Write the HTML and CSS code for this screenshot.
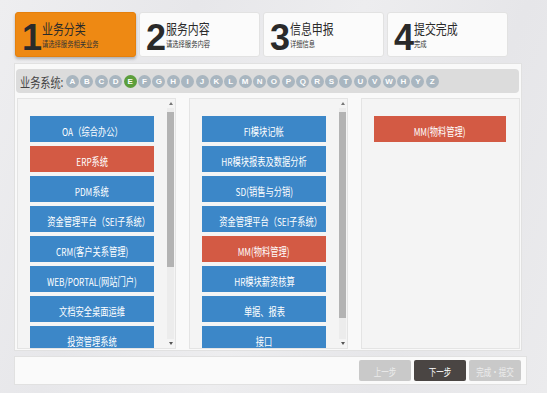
FILE: index.html
```html
<!DOCTYPE html>
<html lang="zh-CN">
<head>
    <meta charset="UTF-8">
    <meta name="viewport" content="width=device-width, initial-scale=1.0">
    <title>服务申报</title>
    <link rel="stylesheet" href="styles.css">
</head>
<body>
  <div class="steps">
    <div class="step active">
      <span class="num">1</span>
      <div class="step-text"><span class="step-title">业务分类</span><span class="step-sub">请选择服务相关业务</span></div>
    </div>
    <div class="step">
      <span class="num">2</span>
      <div class="step-text"><span class="step-title">服务内容</span><span class="step-sub">请选择服务内容</span></div>
    </div>
    <div class="step">
      <span class="num">3</span>
      <div class="step-text"><span class="step-title">信息申报</span><span class="step-sub">详细信息</span></div>
    </div>
    <div class="step">
      <span class="num">4</span>
      <div class="step-text"><span class="step-title">提交完成</span><span class="step-sub">完成</span></div>
    </div>
  </div>

  <div class="panel">
    <div class="filter">
      <span class="filter-label">业务系统:</span>
      <div class="letters">
        <span class="letter">A</span><span class="letter">B</span><span class="letter">C</span><span class="letter">D</span><span class="letter on">E</span><span class="letter">F</span><span class="letter">G</span><span class="letter">H</span><span class="letter">I</span><span class="letter">J</span><span class="letter">K</span><span class="letter">L</span><span class="letter">M</span><span class="letter">N</span><span class="letter">O</span><span class="letter">P</span><span class="letter">Q</span><span class="letter">R</span><span class="letter">S</span><span class="letter">T</span><span class="letter">U</span><span class="letter">V</span><span class="letter">W</span><span class="letter">H</span><span class="letter">Y</span><span class="letter">Z</span>
      </div>
    </div>

    <div class="cols">
      <div class="col">
        <div class="list">
          <div class="item"><span class="lbl">OA（综合办公）</span></div>
          <div class="item sel"><span class="lbl">ERP系统</span></div>
          <div class="item"><span class="lbl">PDM系统</span></div>
          <div class="item"><span class="lbl">资金管理平台（SEI子系统）</span></div>
          <div class="item"><span class="lbl">CRM(客户关系管理)</span></div>
          <div class="item"><span class="lbl">WEB/PORTAL(网站门户)</span></div>
          <div class="item"><span class="lbl">文档安全桌面运维</span></div>
          <div class="item"><span class="lbl">投资管理系统</span></div>
        </div>
        <div class="scroll">
          <span class="arrow up"></span>
          <div class="track"><div class="thumb" style="height:155px"></div></div>
          <span class="arrow down"></span>
        </div>
      </div>

      <div class="col">
        <div class="list">
          <div class="item"><span class="lbl">FI模块记帐</span></div>
          <div class="item"><span class="lbl">HR模块报表及数据分析</span></div>
          <div class="item"><span class="lbl">SD(销售与分销)</span></div>
          <div class="item"><span class="lbl">资金管理平台（SEI子系统）</span></div>
          <div class="item sel"><span class="lbl">MM(物料管理)</span></div>
          <div class="item"><span class="lbl">HR模块薪资核算</span></div>
          <div class="item"><span class="lbl">单据、报表</span></div>
          <div class="item"><span class="lbl">接口</span></div>
        </div>
        <div class="scroll">
          <span class="arrow up"></span>
          <div class="track"><div class="thumb" style="height:206px"></div></div>
          <span class="arrow down"></span>
        </div>
      </div>

      <div class="col">
        <div class="list">
          <div class="item sel"><span class="lbl">MM(物料管理)</span></div>
        </div>
      </div>
    </div>
  </div>

  <div class="footer">
    <button class="btn"><span class="lbl">上一步</span></button>
    <button class="btn next"><span class="lbl">下一步</span></button>
    <button class="btn"><span class="lbl">完成·提交</span></button>
  </div>
</body>
</html>
```

FILE: styles.css
```css
body {
    margin: 0;
    padding: 12px 20px 0 14px;
    height: 393px;
    box-sizing: border-box;
    overflow: hidden;
    font-family: "Noto Sans CJK SC", "Liberation Sans", sans-serif;
    color: #333;
    background: linear-gradient(112deg, #eeeef0 0%, #e7e7ea 28%, #ededef 52%, #e6e6e9 75%, #ebebed 100%);
}

/* step header */
.steps {
    display: flex;
    gap: 3px;
    padding-left: 1px;
}
.step {
    width: 121px;
    height: 45px;
    box-sizing: border-box;
    display: flex;
    align-items: center;
    padding-left: 6px;
    background-color: #fbfbfb;
    border: 1px solid #e2e2e2;
    border-radius: 3px;
}
.step.active {
    background-color: #ee8913;
    border-color: #e5800c;
    box-shadow: 0 2px 3px rgba(0,0,0,0.25);
}
.num {
    font-family: "Liberation Sans Narrow", "Liberation Sans", sans-serif;
    font-weight: bold;
    font-size: 36px;
    line-height: 36px;
    color: #2a2a2a;
    margin-top: 6px;
    letter-spacing: -1px;
}
.step-text {
    display: flex;
    flex-direction: column;
    margin-left: 1px;
}
.step-title {
    display: inline-block;
    font-size: 14px;
    line-height: 15px;
    color: #2a2a2a;
    transform: scaleX(0.78);
    transform-origin: left;
    white-space: nowrap;
}
.step-sub {
    display: inline-block;
    margin-top: 2px;
    font-size: 8.5px;
    line-height: 10px;
    color: #333;
    transform: scaleX(0.74);
    transform-origin: left;
    white-space: nowrap;
}

/* main panel */
.panel {
    width: 508px;
    box-sizing: border-box;
    margin-top: 6px;
    padding: 5px 2px 1px 1px;
    background-color: #f9f9f9;
    border: 1px solid #e1e1e1;
}
.filter {
    height: 24px;
    display: flex;
    align-items: center;
    padding-left: 4px;
    background-color: #dcdcdc;
    border-radius: 4px;
}
.filter-label {
    display: inline-block;
    width: 46px;
    font-size: 13px;
    color: #444;
    transform: scaleX(0.78);
    transform-origin: left;
    white-space: nowrap;
}
.letters {
    display: flex;
    gap: 1.4px;
}
.letter {
    width: 13px;
    height: 13px;
    border-radius: 50%;
    background-color: #a9b6c0;
    color: #fff;
    font-family: "Liberation Sans", sans-serif;
    font-size: 8px;
    font-weight: bold;
    line-height: 13px;
    text-align: center;
}
.letter.on {
    background-color: #5c9e3c;
}

.cols {
    display: grid;
    grid-template-columns: 159px 159px 159px;
    column-gap: 13px;
    margin-top: 5px;
    padding-left: 1px;
}
.col {
    height: 251px;
    box-sizing: border-box;
    display: flex;
    background-color: #f4f4f4;
    border: 1px solid #e4e4e4;
    overflow: hidden;
}
.list {
    flex: 1;
    min-width: 0;
    padding: 17px 13px 0 12px;
}
.item {
    height: 26px;
    margin-bottom: 4px;
    background-color: #3c87c8;
    color: #fff;
    text-align: center;
    line-height: 26px;
    white-space: nowrap;
}
.item.sel {
    background-color: #d35a44;
}
.lbl {
    display: inline-block;
    font-size: 11px;
    white-space: nowrap;
    transform: scaleX(0.75);
}

/* fake scrollbar */
.scroll {
    flex: none;
    width: 7px;
    margin-right: 1px;
    display: flex;
    flex-direction: column;
    align-items: center;
}
.track {
    flex: 1;
    width: 7px;
    background-color: #ececec;
}
.thumb {
    width: 7px;
    margin-top: 4px;
    background-color: #b3b3b3;
}
.arrow {
    width: 0;
    height: 0;
    margin: 3px 0;
    border-left: 2px solid transparent;
    border-right: 2px solid transparent;
}
.arrow.up {
    border-bottom: 3px solid #777;
}
.arrow.down {
    border-top: 3px solid #555;
}

/* footer */
.footer {
    width: 513px;
    height: 29px;
    box-sizing: border-box;
    margin-top: 5px;
    display: flex;
    justify-content: flex-end;
    align-items: center;
    gap: 3px;
    padding-right: 5px;
    background-color: #fafafa;
    border: 1px solid #e1e1e1;
}
.btn {
    width: 52px;
    height: 21px;
    padding: 0;
    border: none;
    border-radius: 2px;
    background-color: #c9c9c9;
    color: #ececec;
    font-family: "Noto Sans CJK SC", sans-serif;
    cursor: pointer;
}
.btn .lbl {
    font-size: 10px;
}
.btn.next {
    background-color: #4a4543;
    color: #fff;
}
```
